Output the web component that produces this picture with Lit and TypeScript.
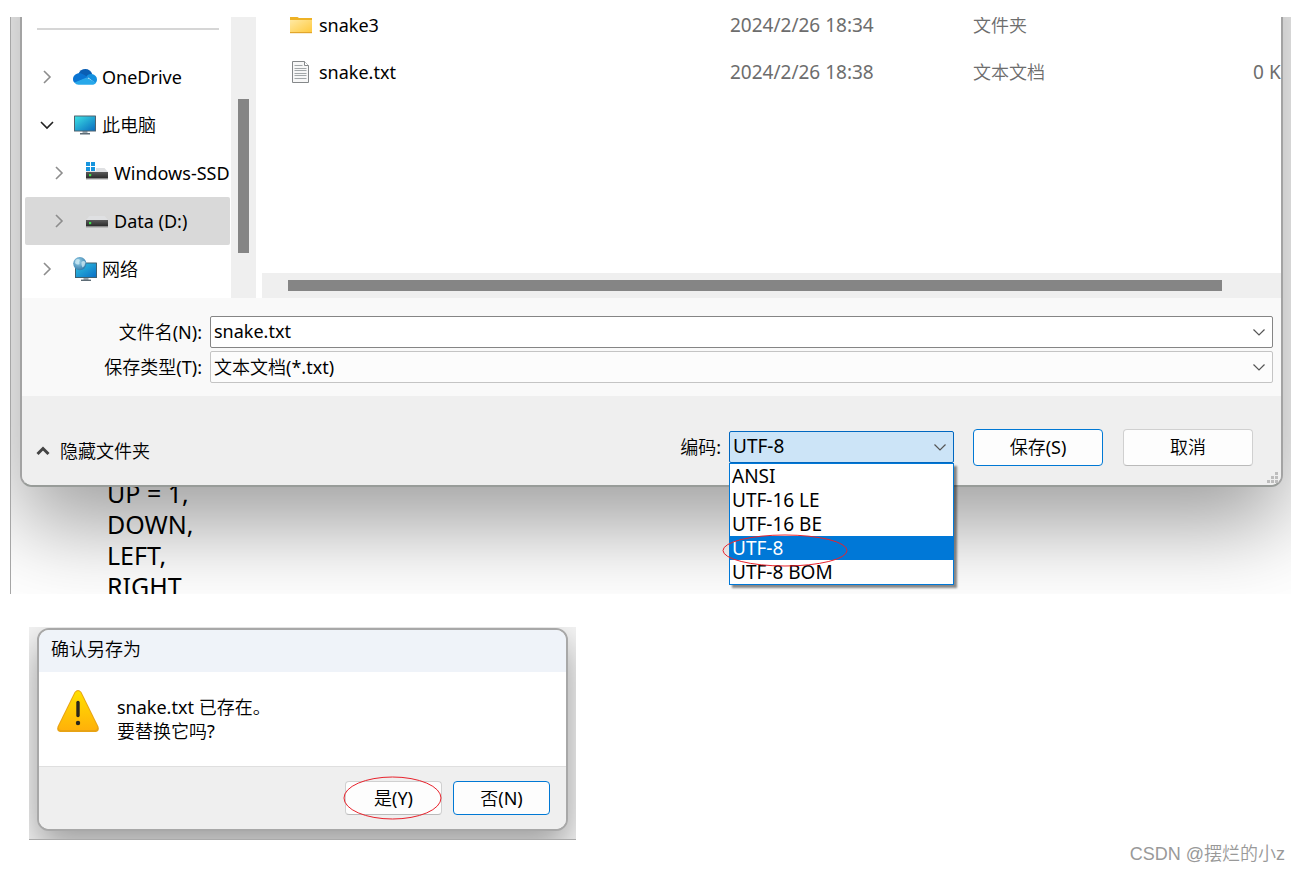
import { LitElement, html, css, svg } from "lit";
import { customElement, property, state } from "lit/decorators.js";
import { classMap } from "lit/directives/class-map.js";

const chevron = (dir: "right" | "down" | "up" | "thin", cls: string) => {
  const d = {
    right: "M5 2 L11 8 L5 14",
    down: "M2 5 L8 11 L14 5",
    up: "M2.5 11 L8 5.5 L13.5 11",
    thin: "M2.5 5.5 L8 11 L13.5 5.5",
  }[dir];
  return html`<svg class=${cls} width="16" height="16" viewBox="0 0 16 16" aria-hidden="true">
    <path d=${d} fill="none" stroke="currentColor" stroke-width=${dir === "up" ? 3 : dir === "thin" ? 1.2 : 1.6} />
  </svg>`;
};

const drive = svg`
  <path d="M4.5 12 H19.5 L23 16 H1 Z" fill="#dfe0e2" />
  <rect x="1" y="16" width="22" height="6" fill="url(#bay)" />
  <rect x="1" y="22" width="22" height="1.4" fill="#8a8a8a" />
  <rect x="4" y="18" width="2.2" height="2.2" fill="#3fe04c" />
  <defs><linearGradient id="bay" x1="0" y1="0" x2="0" y2="1">
    <stop offset="0" stop-color="#5a5a5a" /><stop offset="1" stop-color="#2c2c2c" />
  </linearGradient></defs>`;

const icons: Record<string, unknown> = {
  onedrive: html`<svg width="24" height="24" viewBox="0 0 24 24" aria-hidden="true">
    <path d="M5.2 9.5 C6.4 5.8 9.2 4 12.3 4 C15.6 4 18.3 6 19.2 9 L12.5 12.5 Z" fill="#0a5fb4" />
    <path d="M5.6 8.3 C7.5 8 9.3 8.6 11 9.8 L15.5 12.5 L2 18 C.7 17.2 0 16 0 14.3 C0 11.2 2.5 8.8 5.6 8.3 Z" fill="#0a74d2" />
    <path d="M13.5 11.3 C15.2 9.2 17 8.7 19 9 C22 9.4 24 11.8 24 14.6 C24 16 23.5 17.3 22.6 18.2 Z" fill="#1490df" />
    <path d="M1.6 17.6 L13.7 12.4 L23 17.8 C22 19.2 20.8 19.8 19 19.8 H5.6 C3.8 19.8 2.5 19 1.6 17.6 Z" fill="#28a8ea" />
  </svg>`,
  computer: html`<svg width="24" height="24" viewBox="0 0 24 24" aria-hidden="true">
    <defs><linearGradient id="pc" x1="0" y1="0" x2="1" y2="1">
      <stop offset="0" stop-color="#3ee0e4" /><stop offset=".5" stop-color="#22a6d2" /><stop offset="1" stop-color="#0a6dc0" />
    </linearGradient></defs>
    <path d="M9.5 18 H14.5 V20.5 H9.5 Z" fill="#9aa5ad" /><rect x="7" y="20" width="10" height="1.5" fill="#5d6b75" />
    <rect x="1" y="2.5" width="22" height="16" rx=".6" fill="#50626e" />
    <rect x="2" y="3.5" width="20" height="14" fill="url(#pc)" />
  </svg>`,
  windrive: html`<svg width="24" height="24" viewBox="0 0 24 24" aria-hidden="true">
    <g transform="translate(0 -5)">${drive}</g>
    <path d="M0 0 H11 V10 H0 Z" fill="#fff" />
    <path d="M1 1 H5 V5 H1 Z M6 1 H10 V5 H6 Z M1 6 H5 V10 H1 Z M6 6 H10 V10 H6 Z" fill="#1795de" />
  </svg>`,
  drive: html`<svg width="24" height="24" viewBox="0 0 24 24" aria-hidden="true"><g transform="translate(0 -5)">${drive}</g></svg>`,
  network: html`<svg width="24" height="24" viewBox="0 0 24 24" aria-hidden="true">
    <defs>
      <linearGradient id="net" x1="0" y1="0" x2="1" y2="1">
        <stop offset="0" stop-color="#32c4e0" /><stop offset="1" stop-color="#0a70c6" />
      </linearGradient>
      <radialGradient id="globe" cx=".4" cy=".35" r=".7">
        <stop offset="0" stop-color="#9cd3ea" /><stop offset="1" stop-color="#2f78a8" />
      </radialGradient>
    </defs>
    <rect x="10.5" y="20.5" width="5" height="2.5" fill="#9aa5ad" /><rect x="8" y="22.6" width="10" height="1.4" fill="#5d6b75" />
    <rect x="2" y="5.5" width="22" height="15.5" rx=".6" fill="#3f6070" />
    <rect x="3" y="6.5" width="20" height="13.5" fill="url(#net)" />
    <circle cx="6.8" cy="6.6" r="6.6" fill="url(#globe)" />
    <path d="M2.5 3 Q5 1 7 3 Q5.5 5 6.5 7 Q4 8.5 2 6 Z M8.5 5 Q11 3 12.5 5.5 Q12 9 9.5 10.5 Q8 8 8.5 5 Z" fill="#d3edf6" opacity=".75" />
  </svg>`,
  folder: html`<svg width="24" height="24" viewBox="0 0 24 24" aria-hidden="true">
    <defs><linearGradient id="fold" x1="0" y1="0" x2="1" y2="1">
      <stop offset="0" stop-color="#ffe9a3" /><stop offset="1" stop-color="#ffc93c" />
    </linearGradient></defs>
    <path d="M1 4 H8.5 L10 5 H23 V9 H1 Z" fill="#eeb225" />
    <rect x="1" y="7" width="22" height="13" fill="url(#fold)" /><rect x="1" y="19" width="22" height="1.2" fill="#e2a62c" />
  </svg>`,
  text: html`<svg width="24" height="24" viewBox="0 0 24 24" aria-hidden="true">
    <path d="M3.5 1.5 H15.5 L19.5 5.5 V22.5 H3.5 Z" fill="#f7f7f7" stroke="#85888a" />
    <path d="M15.5 1.5 V5.5 H19.5" fill="#fff" stroke="#85888a" />
    <path d="M5.5 5.5 H13.5 M5.5 8.5 H17.5 M5.5 10.5 H17.5 M5.5 13.5 H17.5 M5.5 15.5 H17.5 M5.5 18.5 H17.5" stroke="#a2a7a9" />
  </svg>`,
};

const base = css`
  * { box-sizing: border-box; }
  button, input, select { font: inherit; color: inherit; margin: 0; }
  .btn {
    background: #fdfdfd;
    border: 1px solid #d0d0d0;
    border-bottom-color: #bababa;
    border-radius: 4px;
    padding: 0 0 1px;
  }
  .btn.primary { border-color: #0078d4; }
`;

interface TreeItem { icon: string; label: string; level: number; open?: boolean; selected?: boolean; }

@customElement("save-dialog")
export class SaveDialog extends LitElement {
  @state() private encoding = "UTF-8";

  private tree: TreeItem[] = [
    { icon: "onedrive", label: "OneDrive", level: 0 },
    { icon: "computer", label: "此电脑", level: 0, open: true },
    { icon: "windrive", label: "Windows-SSD", level: 1 },
    { icon: "drive", label: "Data (D:)", level: 1, selected: true },
    { icon: "network", label: "网络", level: 0 },
  ];

  private files = [
    { icon: "folder", name: "snake3", date: "2024/2/26 18:34", type: "文件夹", size: "" },
    { icon: "text", name: "snake.txt", date: "2024/2/26 18:38", type: "文本文档", size: "0 KB" },
  ];

  private encodings = ["ANSI", "UTF-16 LE", "UTF-16 BE", "UTF-8", "UTF-8 BOM"];

  static styles = [base, css`
    :host {
      display: block;
      position: relative;
      border: 2px solid #a3a3a3;
      border-bottom-color: #989c99;
      border-radius: 12px;
      background: #fff;
      box-shadow: 0 38px 86px rgba(0, 0, 0, 0.38);
      padding-top: 120px;
    }
    .browser { display: flex; height: 281px; overflow: hidden; }
    .side { width: 209px; padding: 11px 1px 0 3px; overflow: hidden; }
    .rule { border: 0; border-top: 2px solid #d6d6d6; margin: 0 11px 23px 12px; }
    .tree { list-style: none; margin: 0; padding: 0; }
    .node {
      display: flex;
      align-items: center;
      height: 48px;
      padding-left: 14px;
      white-space: nowrap;
      overflow: hidden;
      border-radius: 2px;
    }
    .node.child { padding-left: 26px; }
    .node.selected { background: #d9d9d9; }
    .node svg { flex: none; }
    .arrow { color: #8d8d8d; margin-right: 18px; }
    .arrow.open { color: #222; }
    .name { margin-left: 5px; }
    .vbar { width: 25px; background: #efefef; padding: 82px 7px 45px; }
    .thumb { background: #858585; height: 100%; }
    .main { flex: 1; min-width: 0; display: flex; flex-direction: column; margin-left: 6px; }
    .list { flex: 1; overflow: hidden; padding-left: 27px; }
    table { border-collapse: collapse; table-layout: fixed; width: 1004px; margin-top: -16px; color: #6d6d6d; }
    td { height: 47px; padding: 0; white-space: nowrap; }
    .c-name { width: 441px; }
    .c-mid { width: 243px; }
    .file { display: flex; align-items: center; gap: 6px; color: #000; }
    .num { font-size: 19px; }
    .size { text-align: right; }
    .hbar { height: 25px; background: #efefef; padding: 7px 59px 7px 26px; }
    .fields {
      display: grid;
      grid-template-columns: 180px 1fr;
      align-items: center;
      gap: 3px 8px;
      background: #f9f9f9;
      padding: 18px 8px 13px 0;
    }
    .fields label { text-align: right; }
    .combo { position: relative; height: 32px; }
    .combo input, .combo select {
      display: block;
      width: 100%;
      height: 100%;
      appearance: none;
      border: 1px solid #c4c4c4;
      border-radius: 2px;
      background: #fcfcfc;
      padding: 0 32px 0 3px;
      outline: 0;
    }
    .combo input { border-color: #858585; background: #fff; padding-bottom: 2px; }
    .combo .drop { position: absolute; right: 6px; top: 8px; color: #555; pointer-events: none; }
    .foot {
      display: flex;
      align-items: center;
      background: #efefef;
      padding: 33px 28px 19px 13px;
      border-radius: 0 0 10px 10px;
    }
    .hide { display: flex; align-items: center; gap: 9px; border: 0; background: none; padding: 6px 0 0; margin-right: auto; }
    .hide svg { color: #444; }
    .foot label { margin-bottom: 2px; }
    .enc { width: 225px; margin: 0 19px 2px 8px; }
    .enc.combo select { background: #cce4f7; border-color: #0067c0; font-size: 19px; padding-bottom: 1px; }
    .foot .btn { width: 130px; height: 37px; }
    .foot .btn + .btn { margin-left: 20px; }
    .menu {
      position: absolute;
      top: 32px;
      left: 0;
      right: 0;
      list-style: none;
      margin: 0;
      padding: 0;
      background: #fff;
      border: 1px solid #0078d7;
      box-shadow: 3px 3px 2px rgba(0, 0, 0, 0.45);
      font-size: 19px;
      line-height: 24px;
      z-index: 2;
    }
    .menu li { padding-left: 2px; }
    .menu li.on { background: #0078d7; color: #fff; }
    .ring { position: absolute; left: -7px; top: 103px; z-index: 3; pointer-events: none; }
    .grip { position: absolute; right: 3px; bottom: 1px; }
  `];

  render() {
    return html`
      <div class="browser">
        <nav class="side">
          <hr class="rule" />
          <ul class="tree">
            ${this.tree.map((n) => html`
              <li class=${classMap({ node: true, child: n.level > 0, selected: !!n.selected })}>
                ${n.open ? chevron("down", "arrow open") : chevron("right", "arrow")}
                ${icons[n.icon]}<span class="name">${n.label}</span>
              </li>`)}
          </ul>
        </nav>
        <div class="vbar"><div class="thumb"></div></div>
        <div class="main">
          <div class="list">
            <table>
              <colgroup><col class="c-name" /><col class="c-mid" /><col class="c-mid" /><col /></colgroup>
              <tbody>
                ${this.files.map((f) => html`<tr>
                  <td><span class="file">${icons[f.icon]}${f.name}</span></td>
                  <td class="num">${f.date}</td><td>${f.type}</td><td class="num size">${f.size}</td>
                </tr>`)}
              </tbody>
            </table>
          </div>
          <div class="hbar"><div class="thumb"></div></div>
        </div>
      </div>
      <div class="fields">
        <label for="fname">文件名(N):</label>
        <div class="combo"><input id="fname" type="text" value="snake.txt" />${chevron("thin", "drop")}</div>
        <label for="ftype">保存类型(T):</label>
        <div class="combo"><select id="ftype"><option>文本文档(*.txt)</option></select>${chevron("thin", "drop")}</div>
      </div>
      <div class="foot">
        <button class="hide" type="button">${chevron("up", "")}<span>隐藏文件夹</span></button>
        <label for="enc">编码:</label>
        <div class="enc combo">
          <select id="enc" .value=${this.encoding}>
            ${this.encodings.map((e) => html`<option ?selected=${e === this.encoding}>${e}</option>`)}
          </select>
          ${chevron("thin", "drop")}
          <ul class="menu" role="listbox" aria-label="编码">
            ${this.encodings.map((e) => html`<li role="option" aria-selected=${e === this.encoding}
              class=${classMap({ on: e === this.encoding })} @click=${() => (this.encoding = e)}>${e}</li>`)}
          </ul>
          <svg class="ring" width="126" height="33" viewBox="0 0 126 33" aria-hidden="true">
            <ellipse cx="63" cy="16.5" rx="62" ry="15.5" fill="none" stroke="#e8222c" />
          </svg>
        </div>
        <button class="btn primary" type="button">保存(S)</button>
        <button class="btn" type="button">取消</button>
      </div>
      <svg class="grip" width="12" height="12" viewBox="0 0 12 12" aria-hidden="true">
        <path d="M9 0h3v3h-3z M5 4h3v3h-3z M9 4h3v3h-3z M1 8h3v3h-3z M5 8h3v3h-3z M9 8h3v3h-3z" fill="#bdbdbd" />
      </svg>`;
  }
}

@customElement("confirm-dialog")
export class ConfirmDialog extends LitElement {
  @property() file = "";

  static styles = [base, css`
    :host {
      display: block;
      border: 2px solid #a8a8a8;
      border-radius: 12px;
      overflow: hidden;
      background: #fff;
      box-shadow: 0 16px 36px rgba(0, 0, 0, 0.36);
    }
    .title { background: #eff3f9; padding: 7px 12px 10px; line-height: 25px; }
    .body { display: flex; align-items: flex-start; gap: 17px; padding: 17px 17px 23px; }
    .msg { margin: 0; padding-top: 6px; line-height: 24px; }
    .actions {
      display: flex;
      justify-content: flex-end;
      gap: 11px;
      background: #efefef;
      border-top: 1px solid #dfdfdf;
      padding: 14px 16px;
    }
    .actions .btn { width: 97px; height: 34px; }
    .pick { position: relative; display: flex; }
    .ring { position: absolute; left: -2px; top: -5px; pointer-events: none; }
  `];

  render() {
    return html`
      <div class="title">确认另存为</div>
      <div class="body">
        <svg width="44" height="44" viewBox="0 0 44 44" role="img" aria-label="警告">
          <defs><linearGradient id="warn" x1="0" y1="0" x2="0" y2="1">
            <stop offset="0" stop-color="#ffe000" /><stop offset="1" stop-color="#ffb109" />
          </linearGradient></defs>
          <path d="M18.6 3 Q22 -1.2 25.4 3 L42.4 37.5 Q44 42.4 39.4 43 H4.6 Q0 42.4 1.6 37.5 Z" fill="#e8a314" />
          <path d="M19.4 3.6 Q22 .3 24.6 3.6 L41 37 Q42.2 40.7 38.8 41 H5.2 Q1.8 40.7 3 37 Z" fill="url(#warn)" />
          <path d="M22 13.5 V26.5" stroke="#29261c" stroke-width="3.4" stroke-linecap="round" /><circle cx="22" cy="34" r="2.2" fill="#29261c" />
        </svg>
        <p class="msg">${this.file} 已存在。<br />要替换它吗?</p>
      </div>
      <div class="actions">
        <div class="pick">
          <button class="btn" type="button">是(Y)</button>
          <svg class="ring" width="99" height="44" viewBox="0 0 99 44" aria-hidden="true">
            <ellipse cx="49.5" cy="22" rx="48.5" ry="21" fill="none" stroke="#e8222c" />
          </svg>
        </div>
        <button class="btn primary" type="button">否(N)</button>
      </div>`;
  }
}

@customElement("app-root")
export class AppRoot extends LitElement {
  static styles = css`
    * { box-sizing: border-box; }
    :host {
      display: block;
      background: #fff;
      color: #000;
      font: 18px/24px "Noto Sans", "Noto Sans CJK SC DemiLight", "Noto Sans CJK SC", sans-serif;
    }
    .scene { margin: 17px 9px 0 10px; border-left: 1px solid #a6a6a6; overflow: hidden; }
    save-dialog { margin: -122px 8px 0 9px; z-index: 1; }
    .code {
      height: 116px;
      margin: -9px 0 0;
      padding-left: 96px;
      overflow: hidden;
      font: 25px/31px "Noto Sans", sans-serif;
    }
    .shot { width: 547px; margin: 33px 0 0 29px; padding: 0 8px 8px; overflow: hidden; background: #f4f4f4; border-bottom: 1px solid #aaa; }
    .shot confirm-dialog { margin-top: 1px; }
    .mark {
      margin: 0;
      padding: 0 15px 0 0;
      text-align: right;
      font: 18px/28px "Liberation Sans", "Noto Sans CJK SC DemiLight", "Noto Sans CJK SC", sans-serif;
      color: #999;
    }
  `;

  render() {
    return html`
      <section class="scene">
        <save-dialog></save-dialog>
        <pre class="code">UP = 1,
DOWN,
LEFT,
RIGHT</pre>
      </section>
      <section class="shot"><confirm-dialog file="snake.txt"></confirm-dialog></section>
      <p class="mark">CSDN @摆烂的小z</p>`;
  }
}
